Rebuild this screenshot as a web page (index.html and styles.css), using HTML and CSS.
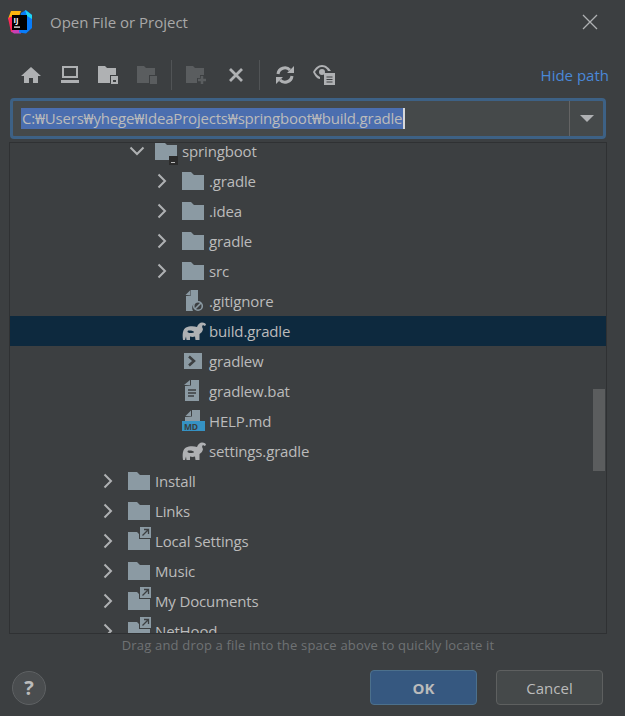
FILE: index.html
```html
<!DOCTYPE html>
<html lang="en">
<head>
    <meta charset="UTF-8" />
    <meta name="viewport" content="width=device-width, initial-scale=1.0" />
    <title>Open File or Project</title>
    <link rel="stylesheet" href="styles.css">
</head>
<body>
    <svg class="defs" width="0" height="0">
        <symbol id="folder" viewBox="0 0 22 20"><path d="M0 1h9l3 3h10v15H0z"/></symbol>
        <symbol id="chev-r" viewBox="0 0 12 16"><path d="M2.5 1.5 9 8l-6.500 6.500" fill="none" stroke="#afb1b3" stroke-width="2"/></symbol>
        <symbol id="chev-d" viewBox="0 0 16 12"><path d="M1.500 2.500 8 9l6.500-6.500" fill="none" stroke="#afb1b3" stroke-width="2"/></symbol>
        <symbol id="gradle" viewBox="0 0 24 20"><path fill-rule="evenodd" d="M1 19C0 13 1 8 4 6.500 7 5 12 5 15 6c1-3 3-4.500 5-4.500 2.500 0 4 1 4 2.500l-1.500 1c-.5-1-1.500-1-2-.5-.7.7-.3 2 .5 3.500-.3 2-1.500 4-3.500 5v6h-4l-.5-3.500c-1.500.5-3.500.5-5 0L8 19H4.500L4 15.500 3 19zM7 9.500c-1 0-1.500.6-1.500 1.200S6.500 12 8.500 12s3.500-.4 3.500-1.100S10 9.500 7 9.500z" fill="#afb1b3"/></symbol>
        <symbol id="doc-lines" viewBox="0 0 16 22"><path d="M7 0h8v21H1V6l6-.5z" fill="#8b9aa3"/><path d="M0 5l6-5v5z" fill="#8b9aa3"/><path d="M4 10h8M4 13h8M4 16h6" stroke="#3c3f41" stroke-width="1.300"/></symbol>
    </svg>

    <header class="title-bar">
        <svg class="app-logo" width="24" height="24" viewBox="0 0 24 24">
            <path d="M3 1h10L9 12 0 9z" fill="#fdb60d"/>
            <path d="M0 8l5-2 3 10-1 7-4-1z" fill="#fe2857"/>
            <path d="M3 21l9-3 1 5.500H6z" fill="#c93fb4"/>
            <path d="M13 3l5-3 6 5v13l-6 5.500-7-1z" fill="#087cfa"/>
            <path d="M17 0l7 5v4l-5-3z" fill="#21d4f0"/>
            <rect x="4" y="5" width="15" height="15" fill="#000"/>
            <text x="5.500" y="12.500" class="logo-text">IJ</text>
            <rect x="6" y="16.500" width="6" height="1.200" fill="#fff"/>
        </svg>
        <span class="title-text">Open File or Project</span>
        <svg class="close-icon" width="16" height="16" viewBox="0 0 16 16"><path d="M1 1l14 14M15 1 1 15" stroke="#afb1b3" stroke-width="1.300"/></svg>
    </header>

    <div class="toolbar">
        <span class="tool-btn"><svg width="20" height="18" viewBox="0 0 20 18"><path d="M10 1 0 10h3v7h5v-5h4v5h5v-7h3z" fill="#afb1b3"/></svg></span>
        <span class="tool-btn"><svg width="20" height="18" viewBox="0 0 20 18"><path d="M2 0h16v12H2zM4 2v8h12V2zM1 14h18v3H1z" fill="#afb1b3" fill-rule="evenodd"/></svg></span>
        <span class="tool-btn"><svg width="21" height="20" viewBox="0 0 21 20"><path d="M0 1h7l2 2h9v7h-6v8H0z" fill="#afb1b3"/><path d="M13 11h7v8h-7z" fill="#afb1b3"/><rect x="15" y="15" width="3" height="2" fill="#3c3f41"/></svg></span>
        <span class="tool-btn"><svg width="21" height="20" viewBox="0 0 21 20"><path d="M0 1h7l2 2h9v7h-6v8H0z" fill="#5a5d5f"/><path d="M13 11h7v8h-7z" fill="#5a5d5f"/></svg></span>
        <span class="tool-sep"></span>
        <span class="tool-btn"><svg width="21" height="20" viewBox="0 0 21 20"><path d="M0 1h7l2 2h9v7h-4v3h-3v5H0z" fill="#5a5d5f"/><path d="M16 11v8M12 15h8" stroke="#5a5d5f" stroke-width="2.500"/></svg></span>
        <span class="tool-btn"><svg width="16" height="16" viewBox="0 0 16 16"><path d="M2 2l12 12M14 2 2 14" stroke="#afb1b3" stroke-width="2.800"/></svg></span>
        <span class="tool-sep"></span>
        <span class="tool-btn"><svg width="20" height="20" viewBox="0 0 20 20"><path d="M3 9a7 7 0 0 1 12-4M17 11a7 7 0 0 1-12 4" fill="none" stroke="#afb1b3" stroke-width="3"/><path d="M12 8h7V1zM8 12H1v7z" fill="#afb1b3"/></svg></span>
        <span class="tool-btn"><svg width="24" height="22" viewBox="0 0 24 22"><path d="M1 8c2-4 5-7 9-7s7 3 9 6h-3c-1-2-3-4-6-4-3 0-5 2-7 5 1 2 3 4 5 5v2C5 15 3 12 1 8z" fill="#afb1b3"/><circle cx="10" cy="8" r="3" fill="#afb1b3"/><path d="M12 9h11v12H12z" fill="#afb1b3"/><path d="M14.500 13h6M14.500 15.500h6M14.500 18h6" stroke="#3c3f41" stroke-width="1.200"/></svg></span>
        <span class="hide-path">Hide path</span>
    </div>

    <div class="path-field">
        <div class="path-input"><span class="path-value">C:₩Users₩yhege₩IdeaProjects₩springboot₩build.gradle</span><span class="caret"></span></div>
        <div class="path-drop"><span class="drop-arrow"></span></div>
    </div>

    <div class="tree-panel">
        <ul class="tree">
            <li class="row level-2">
                <span class="arrow"><svg width="16" height="12"><use href="#chev-d"/></svg></span>
                <span class="icon"><svg class="ic-folder" width="22" height="20"><use href="#folder"/></svg><span class="module-badge"></span></span>
                springboot
            </li>
            <li class="row level-3">
                <span class="arrow"><svg width="12" height="16"><use href="#chev-r"/></svg></span>
                <span class="icon"><svg class="ic-folder" width="22" height="20"><use href="#folder"/></svg></span>
                .gradle
            </li>
            <li class="row level-3">
                <span class="arrow"><svg width="12" height="16"><use href="#chev-r"/></svg></span>
                <span class="icon"><svg class="ic-folder" width="22" height="20"><use href="#folder"/></svg></span>
                .idea
            </li>
            <li class="row level-3">
                <span class="arrow"><svg width="12" height="16"><use href="#chev-r"/></svg></span>
                <span class="icon"><svg class="ic-folder" width="22" height="20"><use href="#folder"/></svg></span>
                gradle
            </li>
            <li class="row level-3">
                <span class="arrow"><svg width="12" height="16"><use href="#chev-r"/></svg></span>
                <span class="icon"><svg class="ic-folder" width="22" height="20"><use href="#folder"/></svg></span>
                src
            </li>
            <li class="row level-3">
                <span class="arrow"></span>
                <span class="icon"><svg width="22" height="22" viewBox="0 0 22 22"><path d="M9 0h7v12a6 6 0 0 0-5 9H4V6l5-.5z" fill="#8b9aa3"/><path d="M3.500 5 8.500 0v5z" fill="#8b9aa3"/><circle cx="16" cy="16" r="4.300" fill="none" stroke="#8b9aa3" stroke-width="1.600"/><path d="M13 19l6-6" stroke="#8b9aa3" stroke-width="1.600"/></svg></span>
                .gitignore
            </li>
            <li class="row level-3 selected">
                <span class="arrow"></span>
                <span class="icon"><svg width="24" height="20"><use href="#gradle"/></svg></span>
                build.gradle
            </li>
            <li class="row level-3">
                <span class="arrow"></span>
                <span class="icon"><svg width="18" height="16" viewBox="0 0 18 16" class="ic-shift"><path d="M0 0h18v16H0z" fill="#8b9aa3"/><path d="M5 3.500 10 8l-5 4.500" fill="none" stroke="#3c3f41" stroke-width="2.500"/></svg></span>
                gradlew
            </li>
            <li class="row level-3">
                <span class="arrow"></span>
                <span class="icon"><svg width="16" height="22" class="ic-shift"><use href="#doc-lines"/></svg></span>
                gradlew.bat
            </li>
            <li class="row level-3">
                <span class="arrow"></span>
                <span class="icon"><svg width="23" height="22" viewBox="0 0 23 22"><path d="M10 0h8v11H3V7l7-.5z" fill="#8b9aa3"/><path d="M3.500 6 9 .5V6z" fill="#8b9aa3"/><rect y="11" width="23" height="10" fill="#3592c4"/><text x="2" y="19.500" class="md-text">MD</text></svg></span>
                HELP.md
            </li>
            <li class="row level-3">
                <span class="arrow"></span>
                <span class="icon"><svg width="24" height="20"><use href="#gradle"/></svg></span>
                settings.gradle
            </li>
            <li class="row level-1">
                <span class="arrow"><svg width="12" height="16"><use href="#chev-r"/></svg></span>
                <span class="icon"><svg class="ic-folder" width="22" height="20"><use href="#folder"/></svg></span>
                Install
            </li>
            <li class="row level-1">
                <span class="arrow"><svg width="12" height="16"><use href="#chev-r"/></svg></span>
                <span class="icon"><svg class="ic-folder" width="22" height="20"><use href="#folder"/></svg></span>
                Links
            </li>
            <li class="row level-1">
                <span class="arrow"><svg width="12" height="16"><use href="#chev-r"/></svg></span>
                <span class="icon"><svg class="ic-folder" width="22" height="20"><use href="#folder"/></svg><span class="link-badge"><svg width="11" height="11" viewBox="0 0 11 11"><path d="M2.500 8.500 8 3M4 2.500h4.500V7" fill="none" stroke="#3c3f41" stroke-width="1.300"/></svg></span></span>
                Local Settings
            </li>
            <li class="row level-1">
                <span class="arrow"><svg width="12" height="16"><use href="#chev-r"/></svg></span>
                <span class="icon"><svg class="ic-folder" width="22" height="20"><use href="#folder"/></svg></span>
                Music
            </li>
            <li class="row level-1">
                <span class="arrow"><svg width="12" height="16"><use href="#chev-r"/></svg></span>
                <span class="icon"><svg class="ic-folder" width="22" height="20"><use href="#folder"/></svg><span class="link-badge"><svg width="11" height="11" viewBox="0 0 11 11"><path d="M2.500 8.500 8 3M4 2.500h4.500V7" fill="none" stroke="#3c3f41" stroke-width="1.300"/></svg></span></span>
                My Documents
            </li>
            <li class="row level-1">
                <span class="arrow"><svg width="12" height="16"><use href="#chev-r"/></svg></span>
                <span class="icon"><svg class="ic-folder" width="22" height="20"><use href="#folder"/></svg><span class="link-badge"><svg width="11" height="11" viewBox="0 0 11 11"><path d="M2.500 8.500 8 3M4 2.500h4.500V7" fill="none" stroke="#3c3f41" stroke-width="1.300"/></svg></span></span>
                NetHood
            </li>
        </ul>
        <div class="scroll-thumb"></div>
    </div>

    <p class="hint">Drag and drop a file into the space above to quickly locate it</p>

    <footer class="actions">
        <span class="help-btn">?</span>
        <span class="btn btn-primary">OK</span>
        <span class="btn">Cancel</span>
    </footer>
</body>
</html>
```

FILE: styles.css
```css
* {
    box-sizing: border-box;
}
html, body {
    height: 100%;
}
body {
    margin: 0;
    background-color: #3c3f41;
    color: #bbbbbb;
    font-family: "Open Sans", "Noto Sans", sans-serif;
    font-size: 15px;
    overflow: hidden;
}
.defs {
    position: absolute;
}
.title-bar {
    display: flex;
    align-items: center;
    height: 44px;
    padding: 0 27px 0 8px;
}
.app-logo {
    margin-right: 18px;
}
.logo-text {
    font-size: 7.500px;
    font-weight: 700;
    fill: #fff;
}
.title-text {
    flex: 1;
    color: #a8a8a8;
}
.toolbar {
    display: flex;
    align-items: center;
    height: 30px;
    margin-top: 16px;
    padding: 0 16px 0 11px;
}
.tool-btn {
    display: flex;
    align-items: center;
    justify-content: center;
    width: 39px;
    height: 30px;
}
.tool-sep {
    width: 1px;
    height: 30px;
    margin: 0 5px 0 4px;
    background-color: #515456;
}
.hide-path {
    margin-left: auto;
    color: #4a88d8;
}
.path-field {
    display: flex;
    height: 41px;
    margin: 8px 19px 0 10px;
    background-color: #45494a;
    border: 3px solid #3d6185;
    border-radius: 4px;
}
.path-input {
    display: flex;
    flex: 1;
    align-items: center;
    padding-left: 8px;
}
.path-value {
    height: 21px;
    padding: 0 1px;
    line-height: 21px;
    background-color: #4b6eaf;
    letter-spacing: -0.2px;
}
.caret {
    width: 2px;
    height: 21px;
    background-color: #d8d8d8;
}
.path-drop {
    display: flex;
    align-items: center;
    justify-content: center;
    width: 34px;
    border-left: 1px solid #646464;
}
.drop-arrow {
    width: 0;
    height: 0;
    border-left: 7px solid transparent;
    border-right: 7px solid transparent;
    border-top: 7px solid #afb1b3;
}
.tree-panel {
    position: relative;
    height: 492px;
    margin: 3px 18px 0 9px;
    border: 1px solid #2f3133;
    overflow: hidden;
}
.tree {
    list-style: none;
    margin: -7px 0 0;
    padding: 0;
    letter-spacing: -0.15px;
}
.row {
    display: flex;
    align-items: center;
    height: 30px;
}
.level-1 {
    padding-left: 87px;
}
.level-2 {
    padding-left: 114px;
}
.level-3 {
    padding-left: 141px;
}
.selected {
    background-color: #0d293e;
}
.arrow {
    display: flex;
    align-items: center;
    width: 31px;
    padding-left: 5px;
}
.icon {
    position: relative;
    display: flex;
    align-items: center;
    width: 27px;
    height: 22px;
}
.ic-folder {
    fill: #8b9aa3;
}
.ic-shift {
    margin-left: 2px;
}
.md-text {
    font-size: 8.500px;
    font-weight: 700;
    fill: #3c3f41;
}
.module-badge {
    position: absolute;
    right: 4px;
    bottom: -3px;
    width: 9px;
    height: 9px;
    background-color: #2b2b2b;
}
.module-badge::after {
    content: "";
    position: absolute;
    left: 2px;
    bottom: 2px;
    width: 4px;
    height: 1px;
    background-color: #bbbbbb;
}
.link-badge {
    position: absolute;
    top: -3px;
    right: 4px;
    display: flex;
    width: 11px;
    height: 11px;
    background-color: #8b9aa3;
    box-shadow: 0 0 0 1px #3c3f41;
}
.scroll-thumb {
    position: absolute;
    top: 246px;
    right: 1px;
    width: 12px;
    height: 82px;
    background-color: #5b5d5e;
}
.hint {
    margin: 2px 0 0;
    padding-right: 9px;
    text-align: center;
    font-size: 13px;
    line-height: 18px;
    letter-spacing: 0.18px;
    color: #6f7274;
}
.actions {
    display: flex;
    align-items: center;
    gap: 19px;
    margin-top: 16px;
    padding: 0 22px 0 12px;
}
.help-btn {
    display: flex;
    align-items: center;
    justify-content: center;
    width: 34px;
    height: 34px;
    margin-right: auto;
    border-radius: 50%;
    background-color: #4a4d4f;
    border: 1px solid #5e6163;
    font-size: 20px;
    font-weight: 700;
}
.btn {
    display: flex;
    align-items: center;
    justify-content: center;
    width: 107px;
    height: 35px;
    background-color: #45494a;
    border: 1px solid #5e6060;
    border-radius: 4px;
}
.btn-primary {
    background-color: #365880;
    border-color: #4c708c;
    font-weight: 700;
}
```
